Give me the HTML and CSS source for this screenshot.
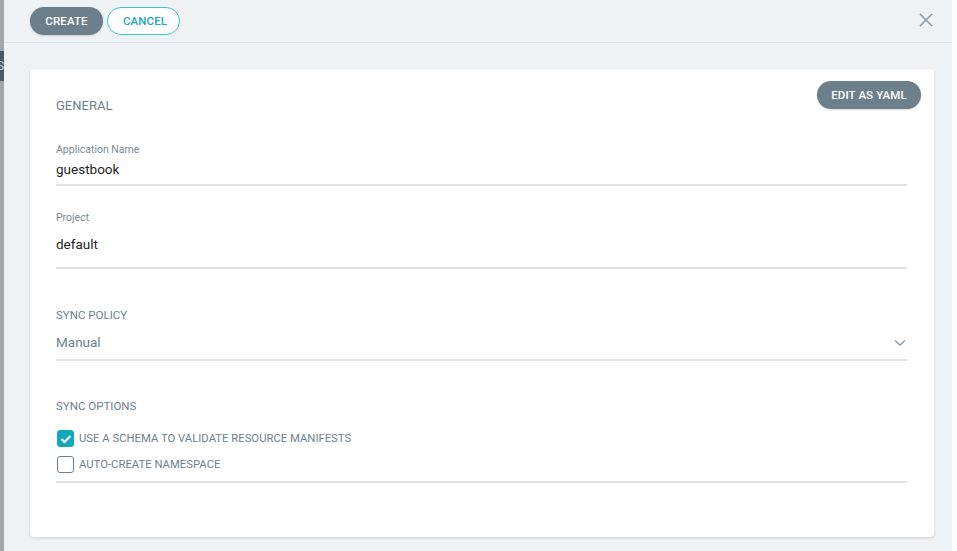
FILE: index.html
```html
<!DOCTYPE html>
<html lang="en">
<head>
    <meta charset="UTF-8">
    <meta name="viewport" content="width=device-width, initial-scale=1.0">
    <title>New App</title>
    <link rel="stylesheet" href="styles.css">
</head>
<body>
<div class="page">
    <div class="side-strip">
        <span class="side-tab">S</span>
    </div>

    <div class="panel">
        <header class="panel-header">
            <div class="header-actions">
                <button class="btn btn-primary">CREATE</button>
                <button class="btn btn-outline">CANCEL</button>
            </div>
            <button class="close-btn" aria-label="Close">
                <svg width="14" height="14" viewBox="0 0 14 14">
                    <path d="M1 1 L13 13 M13 1 L1 13" stroke="#8c9ba5" stroke-width="1.6" fill="none"/>
                </svg>
            </button>
        </header>

        <div class="panel-body">
            <div class="card">
                <button class="btn btn-primary btn-yaml">EDIT AS YAML</button>

                <h4 class="section-title">GENERAL</h4>

                <div class="field field-name">
                    <label class="field-label">Application Name</label>
                    <div class="field-value">guestbook</div>
                </div>

                <div class="field field-project">
                    <label class="field-label">Project</label>
                    <div class="field-value">default</div>
                </div>

                <h4 class="section-title small sync-title">SYNC POLICY</h4>
                <div class="select">
                    <span class="select-value">Manual</span>
                    <svg class="select-arrow" width="12" height="8" viewBox="0 0 12 8">
                        <path d="M1 1.5 L6 6 L11 1.5" stroke="#8c9ba5" stroke-width="1.5" fill="none"/>
                    </svg>
                </div>

                <h4 class="section-title small options-title">SYNC OPTIONS</h4>
                <div class="options">
                    <label class="check-row">
                        <span class="checkbox checked">
                            <svg width="12" height="10" viewBox="0 0 12 10">
                                <path d="M1.5 5 L4.5 8 L10.5 2" stroke="#fff" stroke-width="2" fill="none"/>
                            </svg>
                        </span>
                        USE A SCHEMA TO VALIDATE RESOURCE MANIFESTS
                    </label>
                    <label class="check-row">
                        <span class="checkbox"></span>
                        AUTO-CREATE NAMESPACE
                    </label>
                </div>
            </div>
        </div>
    </div>

    <div class="right-edge"></div>
</div>
</body>
</html>
```

FILE: styles.css
```css
/* Reset + base */
* {
    box-sizing: border-box;
}

html, body {
    margin: 0;
    height: 100%;
}

body {
    font-family: Roboto, "Liberation Sans", Arial, sans-serif;
    background: #ffffff;
    overflow: hidden;
}

.page {
    display: flex;
    height: 551px;
}

/* Left strip of the page behind the slide-out */
.side-strip {
    width: 4px;
    background-color: #a3a7aa;
    padding-top: 51px;
    overflow: hidden;
}

.side-tab {
    display: block;
    width: 4px;
    height: 30px;
    background-color: #4a5a63;
    color: #c8d0d5;
    font-size: 12px;
    line-height: 30px;
    overflow: hidden;
    text-indent: -3px;
}

/* Slide-out panel */
.panel {
    width: 948px;
    background-color: #eef2f5;
    display: flex;
    flex-direction: column;
}

.right-edge {
    flex: 1;
    background-color: #fbfcfd;
}

.panel-header {
    height: 43px;
    border-bottom: 1px solid #dde3e8;
    display: flex;
    align-items: center;
    justify-content: space-between;
    padding: 0 19px 0 26px;
}

.header-actions {
    display: flex;
    gap: 4px;
    padding-bottom: 1px;
}

.btn {
    font-family: inherit;
    font-size: 11.5px;
    font-weight: 500;
    height: 28px;
    border-radius: 14px;
    padding: 0 15px;
    cursor: pointer;
    letter-spacing: 0.1px;
}

.btn-primary {
    background-color: #6d7f8b;
    color: #ffffff;
    border: none;
    box-shadow: 0 1px 2px rgba(0, 0, 0, 0.15);
}

.btn-outline {
    background-color: #ffffff;
    color: #22a8b9;
    border: 1px solid #3ec3d3;
    width: 73px;
}

.header-actions .btn-primary {
    width: 73px;
}

.close-btn {
    background: none;
    border: none;
    padding: 0;
    width: 14px;
    height: 14px;
    cursor: pointer;
    margin-bottom: 2px;
}

/* Body */
.panel-body {
    padding: 26px 18px 0 26px;
}

.card {
    position: relative;
    background-color: #ffffff;
    border-radius: 4px;
    box-shadow: 0 1px 3px rgba(0, 0, 0, 0.15);
    height: 468px;
    padding: 29px 27px 0 26px;
}

.btn-yaml {
    position: absolute;
    top: 12px;
    right: 13px;
    width: 104px;
    padding: 0;
}

.section-title {
    margin: 0;
    font-size: 13px;
    font-weight: 400;
    line-height: 16px;
    color: #6d7f8b;
}

.section-title.small {
    font-size: 11.5px;
}

.field {
    border-bottom: 2px solid #e2e2e2;
}

.field-label {
    display: block;
    font-size: 10.5px;
    line-height: 14px;
    color: #7b8a95;
}

.field-value {
    font-size: 13.5px;
    line-height: 24px;
    color: #1f1f1f;
}

.field-name {
    margin-top: 29px;
    padding-bottom: 3px;
}

.field-project {
    margin-top: 25px;
    padding-bottom: 11px;
}

.field-project .field-value {
    margin-top: 7px;
}

.sync-title {
    margin-top: 38px;
}

.select {
    margin-top: 7px;
    display: flex;
    align-items: center;
    justify-content: space-between;
    padding-bottom: 5px;
    border-bottom: 2px solid #e2e2e2;
}

.select-value {
    font-size: 13.5px;
    line-height: 24px;
    color: #6d7f8b;
}

.select-arrow {
    margin-right: 1px;
    margin-top: 2px;
}

.options-title {
    margin-top: 37px;
}

.options {
    margin-top: 16px;
    padding-bottom: 8px;
    border-bottom: 2px solid #e2e2e2;
    display: flex;
    flex-direction: column;
    gap: 9px;
}

.check-row {
    display: flex;
    align-items: center;
    gap: 5px;
    font-size: 11.3px;
    line-height: 16px;
    color: #6d7f8b;
}

.checkbox {
    width: 17px;
    height: 17px;
    border: 1.5px solid #6d7f8b;
    border-radius: 3px;
    display: flex;
    align-items: center;
    justify-content: center;
    margin-left: 1px;
}

.checkbox.checked {
    background-color: #11a9ba;
    border-color: #11a9ba;
}
```
